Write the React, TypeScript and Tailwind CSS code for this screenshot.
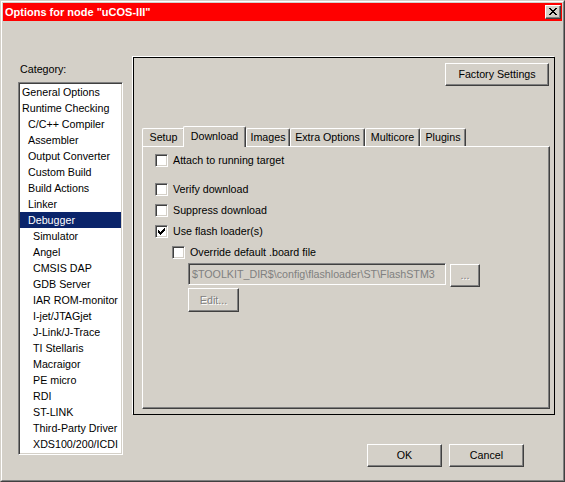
import React from "react";

const raised =
  "border border-t-white border-l-white border-r-[#404040] border-b-[#404040] shadow-[inset_-1px_-1px_0_#808080] bg-[#d4d0c8]";
const sunken =
  "border border-t-[#808080] border-l-[#808080] border-r-white border-b-white shadow-[inset_1px_1px_0_#404040,inset_-1px_-1px_0_#d4d0c8]";

function Check() {
  const rows: [number, number, number][] = [
    [6, 0, 1],
    [5, 1, 2],
    [0, 2, 1],
    [4, 2, 3],
    [0, 3, 2],
    [3, 3, 3],
    [0, 4, 5],
    [1, 5, 3],
    [2, 6, 1],
  ];
  return (
    <svg width="7" height="7" viewBox="0 0 7 7" shapeRendering="crispEdges">
      {rows.map(([x, y, w], i) => (
        <rect key={i} x={x} y={y} width={w} height={1} fill="#000" />
      ))}
    </svg>
  );
}

function CloseGlyph() {
  const px: [number, number, number][] = [
    [0, 0, 2],
    [6, 0, 2],
    [1, 1, 2],
    [5, 1, 2],
    [2, 2, 4],
    [3, 3, 2],
    [2, 4, 4],
    [1, 5, 2],
    [5, 5, 2],
    [0, 6, 2],
    [6, 6, 2],
  ];
  return (
    <svg width="8" height="7" viewBox="0 0 8 7" shapeRendering="crispEdges">
      {px.map(([x, y, w], i) => (
        <rect key={i} x={x} y={y} width={w} height={1} fill="#000" />
      ))}
    </svg>
  );
}

function CheckBox({ checked }: { checked?: boolean }) {
  return (
    <div
      className={`w-[13px] h-[13px] bg-white flex items-center justify-center shrink-0 ${sunken}`}
    >
      {checked ? <Check /> : null}
    </div>
  );
}

function CheckRow({
  label,
  checked,
  className,
}: {
  label: string;
  checked?: boolean;
  className?: string;
}) {
  return (
    <div className={`flex items-center h-[13px] ${className ?? ""}`}>
      <CheckBox checked={checked} />
      <span className="ml-[5px] leading-[13px] whitespace-nowrap">{label}</span>
    </div>
  );
}

const items: [string, number][] = [
  ["General Options", 0],
  ["Runtime Checking", 0],
  ["C/C++ Compiler", 1],
  ["Assembler", 1],
  ["Output Converter", 1],
  ["Custom Build", 1],
  ["Build Actions", 1],
  ["Linker", 1],
  ["Debugger", 1],
  ["Simulator", 2],
  ["Angel", 2],
  ["CMSIS DAP", 2],
  ["GDB Server", 2],
  ["IAR ROM-monitor", 2],
  ["I-jet/JTAGjet", 2],
  ["J-Link/J-Trace", 2],
  ["TI Stellaris", 2],
  ["Macraigor", 2],
  ["PE micro", 2],
  ["RDI", 2],
  ["ST-LINK", 2],
  ["Third-Party Driver", 2],
  ["XDS100/200/ICDI", 2],
];

const tabBase =
  "flex items-center justify-center border-t border-l border-r border-t-white border-l-white border-r-[#404040] shadow-[inset_-1px_0_0_#808080] bg-[#d4d0c8] rounded-tl-[2px] rounded-tr-[2px] whitespace-nowrap";

export default function App() {
  return (
    <div className="w-[565px] h-[482px] font-['Liberation_Sans',Arial,sans-serif] text-[10.7px] text-black bg-[#d4d0c8] border border-t-[#d4d0c8] border-l-[#d4d0c8] border-r-[#404040] border-b-[#404040] overflow-hidden">
      <div className="w-full h-full border border-t-white border-l-white border-r-[#808080] border-b-[#808080] p-[1px] flex flex-col">
        {/* Title bar */}
        <div className="h-[18px] bg-[#ff0000] flex items-center justify-between pl-[2px] pr-[1px] shrink-0">
          <span className="text-white font-bold text-[11px] leading-[13px] whitespace-nowrap">
            Options for node "uCOS-III"
          </span>
          <div
            className={`w-[16px] h-[14px] flex items-center justify-center pb-[1px] ${raised}`}
          >
            <CloseGlyph />
          </div>
        </div>

        {/* Body */}
        <div className="flex flex-row flex-1 pl-[15px] pr-[7px]">
          {/* Left column */}
          <div className="w-[105px] pt-[42px] flex flex-col shrink-0">
            <div className="h-[13px] leading-[13px] pl-[2px]">Category:</div>
            <div className={`mt-[6px] h-[373px] bg-white p-[1px] overflow-hidden ${sunken}`}>
              <div className="flex flex-col">
                {items.map(([name, level]) => {
                  const sel = name === "Debugger";
                  const pad =
                    level === 0 ? "pl-[2px]" : level === 1 ? "pl-[8px]" : "pl-[13px]";
                  return (
                    <div
                      key={name}
                      className={`h-[16px] leading-[16px] whitespace-nowrap ${pad} ${
                        sel ? "bg-[#0a246a] text-white" : ""
                      }`}
                    >
                      {name}
                    </div>
                  );
                })}
              </div>
            </div>
          </div>

          {/* Right column */}
          <div className="ml-[10px] pt-[36px] flex flex-col flex-1">
            <div className="h-[358px] border border-black shadow-[-1px_-1px_0_#ffffff] flex flex-col">
              <div className="pt-[5px] pr-[5px] flex justify-end">
                <div
                  className={`w-[104px] h-[23px] flex items-center justify-center ${raised}`}
                >
                  Factory Settings
                </div>
              </div>

              <div className="mt-[40px] pl-[8px] pr-[4px] flex flex-col">
                {/* Tab row */}
                <div className="h-[20px] flex items-end">
                  <div className={`w-[43px] h-[18px] ${tabBase}`}>Setup</div>
                  <div
                    className={`w-[63px] h-[21px] -ml-[2px] -mb-[1px] relative z-10 pb-[2px] ${tabBase}`}
                  >
                    Download
                  </div>
                  <div className={`w-[44px] h-[18px] ${tabBase}`}>Images</div>
                  <div className={`w-[75px] h-[18px] ${tabBase}`}>Extra Options</div>
                  <div className={`w-[55px] h-[18px] ${tabBase}`}>Multicore</div>
                  <div className={`w-[46px] h-[18px] ${tabBase}`}>Plugins</div>
                </div>

                {/* Tab panel */}
                <div className="h-[263px] border border-t-white border-l-white border-r-[#404040] border-b-[#404040] shadow-[inset_-1px_-1px_0_#808080] flex flex-col pl-[12px]">
                  <CheckRow label="Attach to running target" className="mt-[7px]" />
                  <CheckRow label="Verify download" className="mt-[16px]" />
                  <CheckRow label="Suppress download" className="mt-[8px]" />
                  <CheckRow label="Use flash loader(s)" checked className="mt-[8px]" />
                  <CheckRow
                    label="Override default .board file"
                    className="mt-[8px] ml-[17px]"
                  />
                  <div className="mt-[4px] ml-[33px] flex items-start h-[24px]">
                    <div
                      className={`w-[258px] h-[22px] bg-[#d4d0c8] flex items-center pl-[3px] overflow-hidden whitespace-nowrap text-[#808080] ${sunken}`}
                    >
                      $TOOLKIT_DIR$\config\flashloader\ST\FlashSTM3
                    </div>
                    <div
                      className={`ml-[4px] mt-[1px] w-[30px] h-[23px] flex items-center justify-center text-[#808080] [text-shadow:1px_1px_0_#ffffff] ${raised}`}
                    >
                      ...
                    </div>
                  </div>
                  <div
                    className={`mt-[1px] ml-[33px] w-[51px] h-[24px] flex items-center justify-center text-[#808080] [text-shadow:1px_1px_0_#ffffff] ${raised}`}
                  >
                    Edit...
                  </div>
                </div>
              </div>
            </div>

            {/* Bottom buttons */}
            <div className="mt-[29px] pr-[31px] flex justify-end gap-[7px]">
              <div className={`w-[75px] h-[23px] flex items-center justify-center ${raised}`}>
                OK
              </div>
              <div className={`w-[75px] h-[23px] flex items-center justify-center ${raised}`}>
                Cancel
              </div>
            </div>
          </div>
        </div>
      </div>
    </div>
  );
}
